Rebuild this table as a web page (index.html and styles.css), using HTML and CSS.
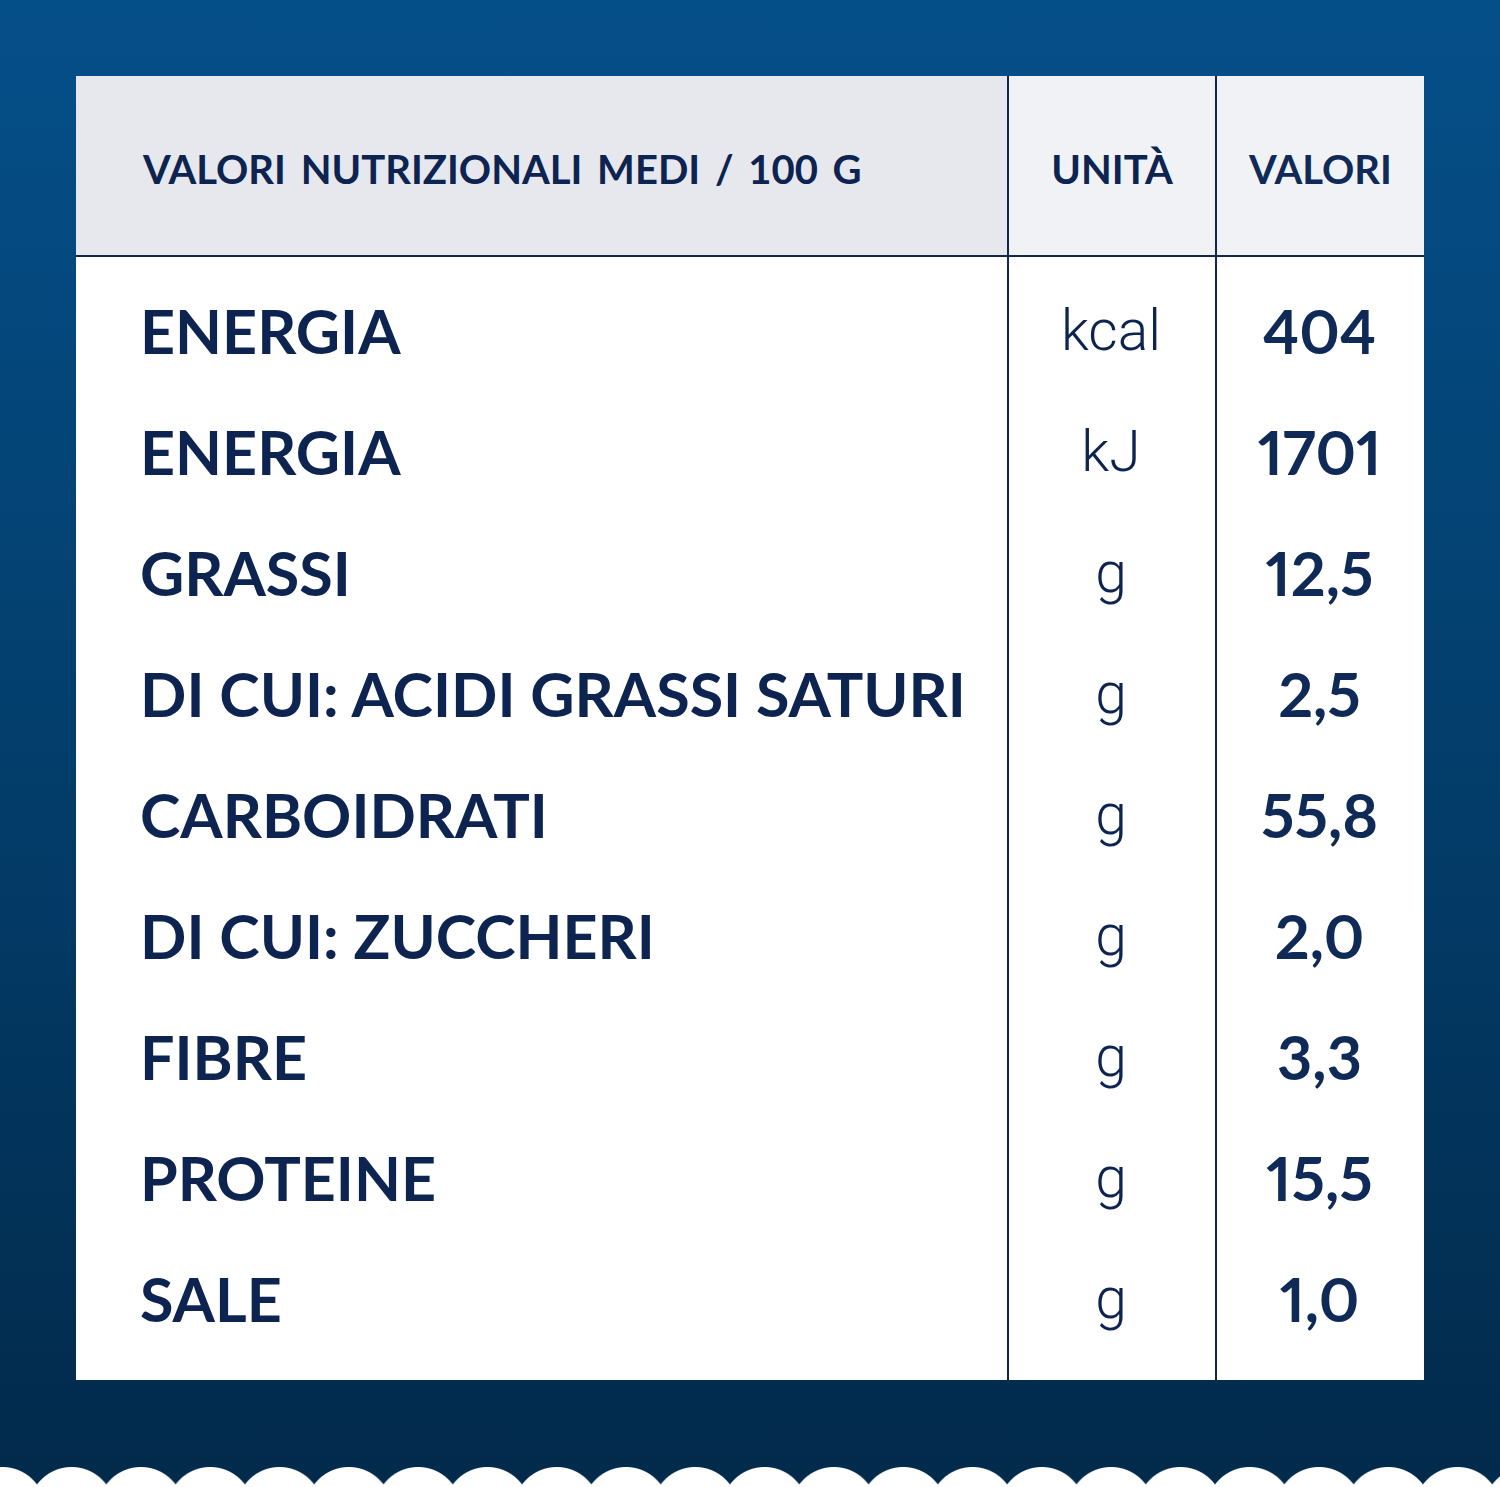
FILE: index.html
```html
<!doctype html>
<html>
<head>
    <meta charset="utf-8">
    <link rel="stylesheet" href="styles.css">
</head>
<body>
    <div class="page">
        <div class="table">
            <div class="cell head name">VALORI NUTRIZIONALI MEDI / 100 G</div>
            <div class="cell head unit">UNITÀ</div>
            <div class="cell head val">VALORI</div>

            <div class="body">
                <div class="cell name">ENERGIA</div>
                <div class="cell unit">kcal</div>
                <div class="cell val">404</div>

                <div class="cell name">ENERGIA</div>
                <div class="cell unit">kJ</div>
                <div class="cell val">1701</div>

                <div class="cell name">GRASSI</div>
                <div class="cell unit">g</div>
                <div class="cell val">12,5</div>

                <div class="cell name">DI CUI: ACIDI GRASSI SATURI</div>
                <div class="cell unit">g</div>
                <div class="cell val">2,5</div>

                <div class="cell name">CARBOIDRATI</div>
                <div class="cell unit">g</div>
                <div class="cell val">55,8</div>

                <div class="cell name">DI CUI: ZUCCHERI</div>
                <div class="cell unit">g</div>
                <div class="cell val">2,0</div>

                <div class="cell name">FIBRE</div>
                <div class="cell unit">g</div>
                <div class="cell val">3,3</div>

                <div class="cell name">PROTEINE</div>
                <div class="cell unit">g</div>
                <div class="cell val">15,5</div>

                <div class="cell name">SALE</div>
                <div class="cell unit">g</div>
                <div class="cell val">1,0</div>
            </div>
        </div>
        <div class="wave"></div>
    </div>
</body>
</html>
```

FILE: styles.css
```css
body {
    margin: 0;
}
.page {
    height: 1487px;
    box-sizing: border-box;
    padding-top: 76px;
    display: flex;
    flex-direction: column;
    align-items: center;
    background: linear-gradient(#054f89, #033e6c 50%, #022a4b);
    font-family: Lato, "Liberation Sans", sans-serif;
    color: #0d2350;
}
.table {
    width: 1348px;
    display: grid;
    grid-template-columns: 931px 208px 209px;
    background: #fff;
}
.body {
    grid-column: 1 / 4;
    display: grid;
    grid-template-columns: 931px 208px 209px;
    grid-auto-rows: 121px;
    padding: 13px 0 21px;
    border-top: 2px solid #16254a;
    background: linear-gradient(90deg, transparent 931px, #16254a 931px, #16254a 933px, transparent 933px, transparent 1139px, #16254a 1139px, #16254a 1141px, transparent 1141px);
}
.cell {
    display: flex;
    align-items: center;
    font-weight: 700;
}
.cell.name {
    padding-left: 64px;
    font-size: 61px;
}
.cell.unit, .cell.val {
    justify-content: center;
}
.cell.unit {
    font-family: Roboto, "Liberation Sans", sans-serif;
    font-weight: 300;
    font-size: 57px;
}
.cell.val {
    font-size: 61px;
    font-variant-numeric: proportional-nums;
    color: #0f2a56;
}
.cell.head {
    height: 179px;
    box-sizing: border-box;
    padding-top: 7px;
    font-family: Lato, "Liberation Sans", sans-serif;
    font-size: 41px;
    font-weight: 700;
    background: #f0f2f6;
}
.cell.head.name {
    padding-left: 67px;
    background: #e6e8ee;
    font-size: 40px;
    word-spacing: 5px;
}
.cell.head.unit, .cell.head.val {
    border-left: 2px solid #16254a;
    font-size: 40px;
}
.wave {
    margin-top: auto;
    align-self: stretch;
    height: 20px;
    background-image: radial-gradient(circle 43px at 34.65px 43px, #fff 42.5px, transparent 43.5px);
    background-size: 69.3px 20px;
    background-position: 37px 0;
    background-repeat: repeat-x;
}
```
